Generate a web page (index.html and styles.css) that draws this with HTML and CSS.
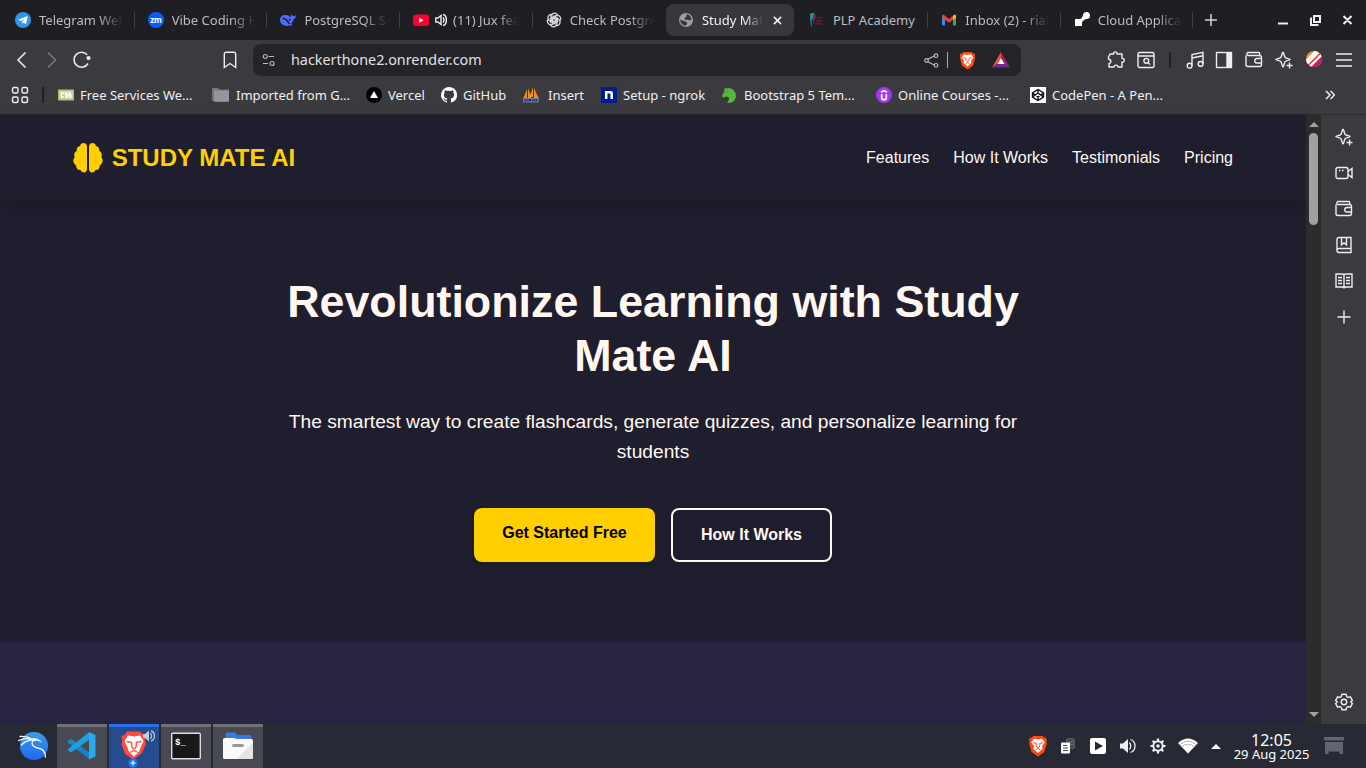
FILE: index.html
```html
<!DOCTYPE html>
<html lang="en">
<head>
<meta charset="utf-8">
<title>Study Mate AI</title>
<link rel="stylesheet" href="styles.css">
</head>
<body>
<svg class="defs" aria-hidden="true">
  <symbol id="sparkle" viewBox="0 0 18 18"><path d="M8 1.200c.9 0 1.100 4.100 2.200 5.200s5 1.300 5 2.100-3.900 1-5 2.100S8.900 16 8 16s-1.100-4.300-2.200-5.400S.8 9.300.8 8.500s3.900-1 5-2.100S7.100 1.200 8 1.200zM14.500 11.500v6M11.500 14.500h6"/></symbol>
  <symbol id="wallet" viewBox="0 0 18 18"><path d="M1 4.500v9a2 2 0 0 0 2 2h11.500a2 2 0 0 0 2-2v-7a2 2 0 0 0-2-2H2.700A1.700 1.700 0 0 1 2.700 1.500h11a1 1 0 0 1 1 1v2M16.500 7.500H12a2 2 0 0 0 0 4.500h4.500"/></symbol>
  <symbol id="brave" viewBox="0 0 18 20"><path fill="#ff4a17" d="M4.500 1h9l1 1.500 1.500-.3L17.200 4.500l-.5 1.500.3 1.500-2.200 8L9 19.500l-5.800-4L1 7.500 1.300 6 .8 4.500 2 2.200l1.500.3z"/><path fill="#fff" d="M5.300 3.500 9 4.200l3.700-.7L15.200 6.700l-2.600 3.500.6 2.300L9 16.300l-4.200-3.800.6-2.300L2.800 6.700z"/><path fill="none" stroke="#ff4a17" stroke-width=".9" d="M4.500 7 7.500 7.700 7.200 10l1.800 1.500L10.800 10l-.3-2.300 3-.7M7 13.300 9 12.200l2 1.100"/></symbol>
</svg>

<header class="tabs">
  <div class="tab"><svg class="fav" viewBox="0 0 16 16"><circle cx="8" cy="8" r="8" fill="#2f95ea"/><path fill="#fff" d="m3 7.700 9.700-3.800L11 12.300 8.500 10.500 7.200 11.700 7 9.600l3.500-3.300L6 9z"/></svg><span>Telegram Web</span></div>
  <div class="tab"><svg class="fav" viewBox="0 0 16 16"><circle cx="8" cy="8" r="8" fill="#0b5cff"/><text x="8" y="10.500" text-anchor="middle" class="zm">zm</text></svg><span>Vibe Coding Hackathon</span></div>
  <div class="tab"><svg class="fav" viewBox="0 0 16 16"><path fill="#4d6bfe" d="M0 8c0-3.500 2.800-5.200 5.500-5C8 3 9.500 4.500 11 5.400c-.5-1.200 0-2.400.5-3.200.4 1.200 1.200 1.700 2 1.700 1 0 1.800-.6 2.500-1-.2 2.300-1 3.800-2.400 4.200-.3 2.300-1.500 3.900-2.500 4.700l1.700 1.200-3.200.4C5.600 15 0 12.500 0 8z"/><path fill="none" stroke="#1f1e23" stroke-width="1.500" d="M2.500 6.500c3-.8 5 2 7 5.500"/><circle cx="9.700" cy="7.700" r="1" fill="#1f1e23"/></svg><span>PostgreSQL SQL</span></div>
  <div class="tab audible"><svg class="fav" viewBox="0 0 16 16"><rect y="2.500" width="16" height="11.500" rx="3" fill="#f03"/><path fill="#fff" d="m6.200 5.700 4.300 2.500-4.300 2.500z"/></svg><svg class="snd" viewBox="0 0 12 14"><path fill="none" stroke="#eee" stroke-width="1.400" d="M.8 5H3L6 2.500v9L3 9H.8zM8 4.500q2 2.500 0 5M8 1.500c4.500 1 4.500 10 0 11"/></svg><span>(11) Jux feat. Diamond</span></div>
  <div class="tab"><svg class="fav" viewBox="0 0 16 16" fill="none" stroke="#ddd" stroke-width="1.200"><path id="knot" d="M5 11.500V4.800c0-3.500 4.500-5 6.500-2M5.500 5l5.300 3"/><use href="#knot" transform="rotate(60 8 8)"/><use href="#knot" transform="rotate(120 8 8)"/><use href="#knot" transform="rotate(180 8 8)"/><use href="#knot" transform="rotate(240 8 8)"/><use href="#knot" transform="rotate(300 8 8)"/></svg><span>Check Postgres</span></div>
  <div class="tab active"><svg class="fav" viewBox="0 0 16 16"><circle cx="8" cy="8" r="7" fill="#9aa0a6"/><path fill="#38373c" d="M8.500 2.200c2.500 0 4.800 2.300 5 4.800l-1.500 1.500-2.500-.8-2 .3L6 6.200l2.500-1.700zM2.300 7.500 5 8.800l2.700.7 1.700 1.700-1.700 2.500C4.500 13.500 2 11 2.300 7.500z"/></svg><span>Study Mate AI</span><svg class="close" viewBox="0 0 10 10"><path d="m1 1 8 8M9 1 1 9"/></svg></div>
  <div class="tab plain"><svg class="fav" viewBox="0 0 16 16"><path fill="#15999d" d="M1 1.500c1-1 2 .5 4.500-1v5.500L1.200 9z"/><path fill="#157577" d="M1 8.500 3 7v7l-1 1z"/><path fill="#8d173d" d="M5 1c2 1 2.500 4 1 6.500L4.500 13 3.800 7z"/><path stroke="#771a3a" stroke-width="1.300" d="M8 5.700h5M7 8.800h6M6 11.800h7"/></svg><span>PLP Academy</span></div>
  <div class="tab"><svg class="fav" viewBox="0 0 16 16"><path fill="#4285f4" d="M1 4h3v9.500H2a1 1 0 0 1-1-1z"/><path fill="#34a853" d="M12 4h3v8.500a1 1 0 0 1-1 1h-2z"/><path fill="#ea4335" d="M4 3.800 8 7l4-3.200v3.900L8 10.800 1 5.400V4C1 2.500 2.700 2 4 3.800z"/><path fill="#fbbc04" d="M12 3.800c1-1.500 3-1.200 3 .4v1.500l-3 2.200z"/></svg><span>Inbox (2) - riakiprop</span></div>
  <div class="tab"><svg class="fav" viewBox="0 0 16 16" fill="#fff"><path d="M1 7h4.500q1.500 0 2.500-1.500L9 3.500A3.500 3.500 0 1 1 12.500 7q-2 0-3 1.500c-1 1.200-1.500 1.500-1.500 2V14H1z"/></svg><span>Cloud Application</span></div>
  <svg class="plus" viewBox="0 0 12 12"><path d="M6 0v12M0 6h12"/></svg>
  <svg class="wins" viewBox="0 0 76 14"><path stroke-width="2" d="M0 10.500h10"/><path stroke-width="2" d="M36 3h6v6h-6zM33 4.500V12h7.500M65.500 3l8 8M73.500 3l-8 8"/></svg>
</header>

<div class="toolbar">
  <svg class="back" viewBox="0 0 80 20"><path stroke="#e8e8ea" d="m13.500 2.500-7.500 7.500 7.500 7.500"/><path stroke="#77767b" d="m36 2.500 7.500 7.500-7.500 7.500"/><path stroke="#eee" d="M75.200 4.800A7.500 7.500 0 1 0 76 13.500"/><circle cx="76.500" cy="8" r="2.100" fill="#eee" stroke="none"/></svg>
  <svg class="ribbon" viewBox="0 0 14 18"><path d="M1.300 3A1.800 1.800 0 0 1 3 1.300h8A1.800 1.800 0 0 1 12.700 3v13.500L7 12.500l-5.700 4z"/></svg>
  <div class="address">
    <svg class="tune" viewBox="0 0 14 14"><path d="M6.500 3.500H12M1 10.500h5"/><circle cx="3.300" cy="3.500" r="2"/><circle cx="10" cy="10.500" r="2"/></svg>
    <span class="url">hackerthone2.onrender.com</span>
    <svg class="share" viewBox="0 0 15 15"><path d="m3.500 6.500 7.500-4M3.500 8.500l7.500 4"/><circle cx="2.500" cy="7.500" r="1.800"/><circle cx="12" cy="2.700" r="1.800"/><circle cx="12" cy="12.300" r="1.800"/></svg>
    <i class="rule"></i>
    <svg class="shield"><use href="#brave"/></svg>
    <svg class="bat" viewBox="0 0 18 16"><path fill="#ff4d2b" d="M9 0v6L5 12.500 0 15.500z"/><path fill="#9e1f63" d="m9 0 9 15.500-5-3L9 6z"/><path fill="#662d91" d="M0 15.500 5 12h8l5 3.500z"/><path fill="#fff" d="m9 6 3.500 6h-7z"/></svg>
  </div>
  <div class="tools">
    <svg viewBox="0 0 18 18"><path d="M3 3h3.800C5.800.2 10.700.2 10 3h5v4.500c3-.8 3 4.300 0 3.500v5H11c0-2.500-4-2.500-4 0H2v-3.500c2.500-.3 2.500-4-.5-4.200V6z" stroke-linejoin="round"/></svg>
    <svg viewBox="0 0 18 18"><rect x="1" y="1.500" width="16" height="15" rx="1.500"/><path d="M1 5h16M11 11.500l2 2"/><circle cx="9.300" cy="9.800" r="2.400"/></svg>
    <i class="dark-rule"></i>
    <svg viewBox="0 0 18 18"><path d="M6 14.500v-11l11-2.200v11.500M6 7l11-2.200"/><circle cx="3.600" cy="14.700" r="2.400"/><circle cx="14.600" cy="12.900" r="2.400"/></svg>
    <svg viewBox="0 0 18 18"><rect x="1.500" y="1.500" width="15" height="15"/><path fill="#eee" d="M12 2h4v14h-4z"/></svg>
    <svg><use href="#wallet"/></svg>
    <svg><use href="#sparkle"/></svg>
    <svg class="leo" viewBox="0 0 18 18"><clipPath id="disc"><circle cx="9" cy="8" r="8"/></clipPath><g clip-path="url(#disc)"><path fill="#ff8a3c" d="M0 0h18v18H0z"/><path fill="#b11f7d" d="M18 4v14H6z"/><path stroke="#fff" stroke-width="5" d="M-1 14 14-1"/><path stroke="#dc2452" stroke-width="1.500" d="M1 17 17 1"/><path stroke="#fff" stroke-width="2.500" d="M3 17.500 18 2.500"/><path stroke="#dc2452" stroke-width="1.300" d="M6 17 18 5"/></g></svg>
    <svg viewBox="0 0 18 18"><path stroke-width="1.700" d="M1 3h16M1 9h16M1 15h16"/></svg>
  </div>
</div>

<nav class="bookmarks">
  <svg class="apps" viewBox="0 0 18 18"><rect x="1.500" y="1.500" width="5.500" height="5.500" rx="1.500"/><rect x="11" y="1.500" width="5.500" height="5.500" rx="1.500"/><rect x="1.500" y="11" width="5.500" height="5.500" rx="1.500"/><rect x="11" y="11" width="5.500" height="5.500" rx="1.500"/></svg>
  <i class="dark-rule"></i>
  <div class="bm w1"><svg viewBox="0 0 16 16"><path fill="#b3b16d" d="M0 2.500h16v11H0z"/><path fill="#cfcea0" d="M1 3.500h14v9H1z"/><path stroke="#fffff0" stroke-width="1.300" fill="none" d="M6 6H3.500v4H6M9.500 6H7.500v2h2v2h-2M13 6h-2v2h2v2h-2"/></svg>Free Services We...</div>
  <div class="bm w2"><svg viewBox="0 0 16 16"><path fill="#77767c" d="M-1 1h6l1.500 1.500H16v11q0 1-1 1H.5L-1 13z"/><path fill="#96959c" d="M1 3.500h15v10.200q0 1-1 1H2.500Q1 14.700 1 13.200z"/></svg>Imported from G...</div>
  <div class="bm w3"><svg viewBox="0 0 16 16"><circle cx="8" cy="8" r="8"/><path fill="#fff" d="m8 4 4 7H4z"/></svg>Vercel</div>
  <div class="bm w4"><svg viewBox="0 0 16 16"><path fill="#fff" d="M8 0a8 8 0 0 0-2.500 15.600c.4.100.5-.2.500-.4v-1.400c-2.200.5-2.700-1-2.700-1-.4-.9-.9-1.200-.9-1.200-.7-.5.100-.5.100-.5.800.1 1.200.8 1.200.8.7 1.300 1.900.9 2.300.7.100-.5.300-.9.500-1.100-1.800-.2-3.600-.9-3.600-4 0-.9.300-1.600.8-2.100-.1-.2-.4-1 .1-2.100 0 0 .7-.2 2.200.8a7.500 7.500 0 0 1 4 0c1.500-1 2.200-.8 2.200-.8.5 1.100.2 1.900.1 2.100.5.600.8 1.300.8 2.100 0 3.100-1.900 3.800-3.700 4 .3.300.6.800.6 1.500v2.200c0 .200.100.500.600.4A8 8 0 0 0 8 0z"/></svg>GitHub</div>
  <div class="bm w5"><svg viewBox="0 0 16 16"><path fill="#f08c20" d="M4 2v9H.500zM5 1l3.500 10H5zM10 0v10H6.500zM11 1l4.500 10H11z"/><path fill="#6d78a6" d="M0 11h16l-.5 4.500H0z"/><path stroke="#272b3b" fill="none" d="M2 14.500v-2l1 1 1-1v2M6 14.500v-2h2v1H6M10 14.500v-2l1 1 1-1v2M13.500 12v2.500"/></svg>Insert</div>
  <div class="bm w6"><svg viewBox="0 0 16 16"><path fill="#001e8b" d="M0 0h16v16H0z"/><path stroke="#fff" stroke-width="2.500" fill="none" d="M5.200 12V4M5.200 5.200h4.500q1 0 1 1V12"/></svg>Setup - ngrok</div>
  <div class="bm w7"><svg viewBox="0 0 16 16"><path fill="#52b93c" d="m3 0 1 1.500L7 1l4 1.500L13.500 6l.500 4-2 4-4 2-3-.5C7 13.500 7.500 12 6.500 10L3.500 9.500 1.500 11 0 9l2-4z"/><path fill="#3b3a3f" d="m4 5 1.500-.5-.5 1z"/></svg>Bootstrap 5 Tem...</div>
  <div class="bm w8"><svg viewBox="0 0 16 16"><circle cx="8" cy="8" r="8" fill="#a435f0"/><path fill="none" stroke="#fff" stroke-width="1.700" d="M5.700 7v3.700q0 2 2.300 2t2.300-2V7M5 5.300l3-1.800 3 1.800"/></svg>Online Courses -...</div>
  <div class="bm w9"><svg viewBox="0 0 16 16"><path fill="#fff" d="M0 0h16v16H0z"/><path fill="none" stroke="#111" stroke-width="1.400" d="m8 2.500 5.500 3.500v4L8 13.500 2.500 10V6zM2.500 6 8 10l5.500-4M2.500 10 8 6l5.500 4M8 2.500V6M8 10v3.500"/></svg>CodePen - A Pen...</div>
  <svg class="more" viewBox="0 0 10 10"><path d="m1 1 4 4-4 4M5.500 1l4 4-4 4"/></svg>
</nav>

<div class="middle">
  <main class="site">
    <header class="sitenav">
      <div class="logo"><svg viewBox="0 0 30 30"><path d="M14 3.500V26c0 4.500-5.500 4.500-6.500 1C4.500 27 3 25 3.200 22.500 0 20.500-.5 16.500 1.700 14 .5 11.500 1.500 9 3.700 8 3.300 5 5 3.300 7 3c.5-4 7-4 7 .5zM16 3.500V26c0 4.500 5.500 4.500 6.500 1 3 0 4.500-2 4.300-4.500 3.200-2 3.700-6 1.500-8.500 1.200-2.500.2-5-2-6 .4-3-1.300-4.700-3.300-5-.5-4-7-4-7 .5z"/></svg>STUDY MATE AI</div>
      <div class="links"><a>Features</a><a>How It Works</a><a>Testimonials</a><a>Pricing</a></div>
    </header>
    <section class="hero">
      <h1>Revolutionize Learning with Study Mate AI</h1>
      <p>The smartest way to create flashcards, generate quizzes, and personalize learning for students</p>
      <div class="cta"><a class="btn primary">Get Started Free</a><a class="btn outline">How It Works</a></div>
    </section>
    <section class="next"></section>
  </main>
  <div class="scroll"><i class="up"></i><i class="thumb"></i><i class="down"></i></div>
  <aside class="side">
    <svg><use href="#sparkle"/></svg>
    <svg viewBox="0 0 18 18"><rect x="1" y="3.500" width="12" height="11" rx="2"/><path d="m13 7.500 4-3v9l-4-3M4 6.500h1.500M7 6.500h1.500"/></svg>
    <svg><use href="#wallet"/></svg>
    <svg viewBox="0 0 18 18"><path d="M4 1.500h12v15H4a2 2 0 0 1-2-2v-11a2 2 0 0 1 2-2zM2 14q.5-1.500 2-1.500h12M6.500 1.500V9L9 6.800 11.500 9V1.500"/></svg>
    <svg viewBox="0 0 18 18"><path d="M1 2h6q2 0 2 1.500Q9 2 11 2h6v13h-6q-2 0-2 1.500Q9 15 7 15H1zM9 3v13M3 5.500h4M3 8.500h4M3 11.500h4M11 5.500h4M11 8.500h4M11 11.500h4"/></svg>
    <svg viewBox="0 0 18 18"><path d="M9 2.500v13M2.500 9h13"/></svg>
    <svg class="gear" viewBox="0 0 18 18"><path d="M7 1.300h4l.7 2.200 1.500.9 2.200-.6 2 3.500L15.800 9l1.600 1.700-2 3.500-2.200-.6-1.500.9-.7 2.200H7l-.7-2.200-1.500-.9-2.200.6-2-3.500L2.200 9 .6 7.300l2-3.500 2.200.6 1.500-.9z"/><circle cx="9" cy="9" r="2.700"/></svg>
  </aside>
</div>

<footer class="taskbar">
  <div class="launch"><svg viewBox="0 0 30 30"><defs><linearGradient id="kali" x2="0" y2="1"><stop stop-color="#3d9ce8"/><stop offset="1" stop-color="#1f66f5"/></linearGradient></defs><circle cx="16" cy="15" r="14" fill="url(#kali)"/><path fill="none" stroke="#f5f8fc" stroke-width="1.300" stroke-linecap="round" d="M2 5.500Q9 5 15 8.500M.5 9.500q7.500-3 14.500-1M3.500 14q4-4.500 11.500-5.500M15.500 8.500c-3 4-1 7.500 4 8.500 5 .7 8 4 7.800 9"/><path fill="#f5f8fc" d="M14.500 7.500c4-1 7.500 1 9.500 4l-3-1.200c-2-.7-4-.5-5.500 0z"/></svg></div>
  <div class="task"><svg viewBox="0 0 30 30"><path fill="#1684ca" d="m1 9.500 3-2 18 14V28L1 11.500z"/><path fill="#209ce0" d="m1 18 21-17v8L4 21.500l-3-2z"/><path fill="#2ba9ec" d="m22 1 6.500 3v21.500L22 28.500z"/></svg></div>
  <div class="task current"><svg viewBox="0 0 30 30"><path fill="#ff4a3d" d="M8 .5h13l3 3.500 3 1-1 4 1 4-4 9-8.500 6.500L6 23 2.500 13l1-4-1-4 3-1z"/><path fill="#fff" d="m9 4.500 6 1 6-1 3.500 5.500-3 6.500L20 21l-5 4.500L10 21l-1.500-4.500-3-6.500z"/><path fill="none" stroke="#ff4a3d" stroke-width="1.300" d="m7.500 10.500 5 .8.500 5 2 1.700 2-1.700.5-5 5-.8M11 21.500l4-2 4 2"/></svg><svg class="badge-snd" viewBox="0 0 12 12"><path fill="#c4cede" d="M0 4h2l4-3.500v11L2 8H0z"/><path fill="none" stroke="#b3c0d6" stroke-width="1.300" d="M7.500 3q2 3 0 6M8 1c4.500 1 4.500 9 0 10"/></svg><svg class="badge-plus" viewBox="0 0 10 10"><circle cx="5" cy="5" r="4.700" fill="#2572e8"/><path stroke="#fff" stroke-width="1.200" d="M5 2.500v5M2.500 5h5"/></svg></div>
  <div class="task"><svg viewBox="0 0 30 30"><rect x=".7" y="2.200" width="28.600" height="25.600" rx="1" fill="#181818" stroke="#ddd" stroke-width="1.400"/><text x="4" y="13.500" class="term">$_</text></svg></div>
  <div class="task"><svg viewBox="0 0 30 30"><path fill="#3879e7" d="M2.500 3q0-1.500 1.500-1.500h8l2.500 2.500H27q1.500 0 1.500 1.500V12h-26z"/><path fill="#fafafa" d="M0 8.500Q0 7 1.500 7h10L13 8h15.500Q30 8 30 9.500v17q0 1.500-1.500 1.500h-27Q0 28 0 26.500z"/><path fill="#e5e5e5" d="M30 11v15.500q0 1.500-1.500 1.500H14z"/><rect x="9" y="13" width="12" height="3" rx="1.500" fill="#999"/></svg></div>
  <div class="tray">
    <svg class="tbrave" viewBox="0 0 18 20"><use href="#brave"/></svg>
    <svg viewBox="0 0 18 18"><rect x="7.500" y="1.500" width="8" height="10" rx="1.500" fill="#484a53" stroke="#5b5d65"/><path stroke="#777" d="M9.500 5H14M10 7.500h4"/><rect x="2" y="5.500" width="9" height="11" rx="1" fill="#fff"/><path stroke="#444" d="M4 8.500h4M4 11h5M4 13.500h5"/></svg>
    <svg viewBox="0 0 18 18"><rect x="1" y="1" width="16" height="16" rx="2" fill="#fff"/><path fill="#272a34" d="m6 4.500 8 4.500-8 4.500z"/></svg>
    <svg viewBox="0 0 18 18"><path fill="#eee" d="M1 6.500h3L9 2v14l-5-4.500H1z"/><path fill="none" stroke="#eee" stroke-width="1.300" d="M10.500 5.500q2.500 3.500 0 7M11.500 2.500c6 2 6 11 0 13"/></svg>
    <svg viewBox="0 0 18 18"><circle cx="9" cy="9" r="4.700" fill="none" stroke="#eee" stroke-width="2"/><circle cx="9" cy="9" r="1.800" fill="#eee"/><path stroke="#eee" stroke-width="2.200" d="M9 1.500v2.500M9 14v2.500M1.500 9H4M14 9h2.500M3.700 3.700 5.500 5.500M12.500 12.500l1.800 1.800M14.300 3.700l-1.800 1.800M5.500 12.500l-1.800 1.800"/></svg>
    <svg class="wifi" viewBox="0 0 20 16"><path fill="#fff" d="M0 5q10-9 20 0L10 15.500z"/><path fill="none" stroke="#a4a6aa" stroke-width=".8" d="M1.500 6.700q8.500-7 17 0M3.500 8.700q6.500-5 13 0"/></svg>
    <svg class="caret" viewBox="0 0 10 5"><path fill="#fff" d="m5 0 5 5H0z"/></svg>
    <div class="clock"><b>12:05</b><span>29 Aug 2025</span></div>
    <svg class="desk" viewBox="0 0 20 18"><path fill="#626570" d="M0 0h20v3.500H0zM1 5h18v12h-3.500v-2.500h-11V17H1z"/></svg>
  </div>
</footer>
</body>
</html>
```

FILE: styles.css
```css
* { box-sizing: border-box; }
body { margin: 0; width: 1366px; height: 768px; overflow: hidden; display: flex; flex-direction: column; font-family: "Noto Sans", sans-serif; background: #3b3a3f; color: #f0f0f2; }
svg { flex: none; display: block; }
.defs { display: none; }

.tabs { height: 40px; flex: none; background: #1f1e23; display: flex; align-items: center; padding-left: 2px; }
.tab { width: 132.700px; flex: none; height: 32px; display: flex; align-items: center; padding-left: 13px; position: relative; font-size: 13px; color: #bdbcc0; }
.tab span { margin-left: 8px; width: 84px; white-space: nowrap; overflow: hidden; -webkit-mask-image: linear-gradient(to right, #000 70%, transparent 100%); mask-image: linear-gradient(to right, #000 70%, transparent 100%); }
.tab.plain span { -webkit-mask-image: none; mask-image: none; }
.tab::after { content: ""; position: absolute; right: 0; top: 8px; width: 1px; height: 16px; background: #424147; }
.fav { width: 16px; height: 16px; }
.zm { font: bold 8px "Noto Sans", sans-serif; fill: #fff; }
.audible .snd { width: 12px; height: 14px; margin-left: 6px; }
.tab.audible span { margin-left: 6px; width: 65px; }
.tab.active { color: #f2f2f4; background: #38373c; border-radius: 8px; width: 128px; margin: 0 2px 0 .5px; padding-left: 12px; }
.tab.active span { width: 61px; }
.tab.active ~ .tab { width: 132.400px; }
.tab.active::after, .tab:nth-child(5)::after { display: none; }
.close { width: 9px; height: 9px; margin-left: 10px; stroke: #f5f5f5; stroke-width: 1.700; }
.plus { width: 12px; height: 12px; margin-left: 12px; stroke: #d5d5d8; stroke-width: 1.500; }
.wins { width: 76px; height: 14px; margin-left: auto; margin-right: 12px; fill: none; stroke: #efeff2; }

.toolbar { height: 40px; flex: none; display: flex; align-items: center; padding-left: 12px; }
.back { width: 80px; height: 20px; fill: none; stroke-width: 1.600; }
.ribbon { width: 14px; height: 18px; margin: 0 23px 0 131px; fill: none; stroke: #eee; stroke-width: 1.400; }
.address { width: 768px; height: 32px; border-radius: 8px; background: #242328; display: flex; align-items: center; margin-left: -7px; padding: 0 11px 0 9px; }
.tune, .share { width: 14px; height: 14px; fill: none; stroke: #bbb; stroke-width: 1.200; }
.share { width: 15px; height: 15px; margin-left: auto; }
.url { margin-left: 15px; font-size: 14.350px; color: #e1e0e5; padding-bottom: 2px; }
.rule { width: 1px; height: 16px; background: #aaa; margin: 0 11px 0 8px; }
.shield { width: 17px; height: 19px; }
.bat { width: 18px; height: 16px; margin-left: 16px; }
.tools { display: flex; align-items: center; margin-left: 86px; gap: 11.850px; }
.tools svg, .side svg, .apps { width: 18px; height: 18px; fill: none; stroke: #eee; stroke-width: 1.400; overflow: visible; }
.tools .leo { stroke: none; }
.dark-rule { width: 2px; height: 16px; background: #202024; flex: none; }
.tools .dark-rule { margin: 0 3px 0 2px; }

.bookmarks { height: 35px; flex: none; display: flex; align-items: center; padding: 0 31px 5px 11px; border-bottom: 1px solid #2c2b30; font-size: 13px; }
.bookmarks .dark-rule { margin: 0 14px 0 13px; }
.bm { display: flex; align-items: center; gap: 6px; flex: none; white-space: nowrap; }
.bm svg { width: 16px; height: 16px; overflow: visible; }
.w1 { width: 155px; } .w2 { width: 153px; gap: 7px; } .w3 { width: 75px; } .w4 { width: 82px; } .w5 { width: 78px; gap: 9px; }
.w6 { width: 121px; } .w7 { width: 154px; } .w8 { width: 154px; }
.more { width: 10px; height: 10px; margin-left: auto; fill: none; stroke: #eee; stroke-width: 1.500; }

.middle { height: 609px; flex: none; display: flex; }
.site { width: 1306px; display: flex; flex-direction: column; background: #1f1e2e; color: #fff7f0; font-family: "Liberation Sans", Arial, sans-serif; }
.sitenav { height: 86px; flex: none; display: flex; align-items: center; justify-content: space-between; padding: 0 73px 0 72px; box-shadow: 0 2px 10px rgba(0,0,0,.22); font-size: 16px; }
.logo { display: flex; align-items: center; gap: 9px; color: #ffcf00; font-size: 24px; font-weight: 700; padding-left: .7px; }
.logo svg { width: 30px; height: 30px; fill: #ffcf00; margin-bottom: 1px; }
.links { display: flex; gap: 24px; }
.hero { height: 441px; flex: none; display: flex; flex-direction: column; align-items: center; padding-top: 73px; text-align: center; }
h1 { margin: 0; width: 800px; font-size: 44.800px; line-height: 54px; }
.hero p { margin: 24px 0 0; width: 760px; font-size: 19.200px; line-height: 30px; padding-top: 1px; }
.cta { display: flex; gap: 16px; margin-top: 41px; }
.btn { height: 54px; border-radius: 8px; font-size: 16px; font-weight: 700; box-shadow: 0 4px 6px rgba(0,0,0,.1); }
.primary { width: 181px; background: #ffcf00; color: #000; line-height: 50px; }
.outline { width: 161px; border: 2px solid #fff7f0; line-height: 50px; }
.next { flex: 1; background: #272442; }

.scroll { width: 15px; background: #2c2c2c; display: flex; flex-direction: column; align-items: center; padding: 7px 0; }
.up, .down { border: 5px solid transparent; height: 0; }
.up { border-top: 0; border-bottom-color: #a0a0a0; }
.thumb { width: 9px; height: 92px; margin-top: 6px; border-radius: 5px; background: #a0a0a0; }
.down { border-bottom: 0; border-top-color: #a0a0a0; margin-top: auto; }
.side { width: 45px; display: flex; flex-direction: column; align-items: center; gap: 18px; padding: 13px 0; }
.side .gear { margin-top: auto; }

.taskbar { height: 44px; flex: none; background: #272a34; display: flex; }
.launch { width: 57px; padding: 7px 0 0 18px; }
.launch svg, .task > svg:first-child { width: 30px; height: 30px; }
.task { width: 50px; margin-right: 2px; background: #484952; border-top: 3px solid #717278; padding: 4px 10px; position: relative; }
.current { background: #264b8f; border-color: #2674ed; }
.badge-snd { position: absolute; width: 12px; height: 12px; right: 4px; top: 3px; }
.badge-plus { position: absolute; width: 10px; height: 10px; left: 19px; bottom: 0; }
.term { font: bold 9px "Liberation Mono", monospace; fill: #fff; }
.tray { margin-left: auto; display: flex; align-items: center; gap: 12px; padding-right: 22px; }
.tray svg { width: 18px; height: 18px; }
.tray .tbrave { width: 20px; height: 22px; margin-right: -1px; }
.tray .wifi { width: 20px; height: 16px; margin: 0 1px 0 -1px; }
.tray .caret { width: 10px; height: 5px; }
.clock { width: 77px; margin-right: 2px; display: flex; flex-direction: column; align-items: center; white-space: nowrap; color: #fff; }
.clock b { font-size: 16px; font-weight: 400; line-height: 16px; }
.clock span { font-size: 13px; line-height: 13px; }
.tray .desk { width: 20px; height: 18px; }
```
